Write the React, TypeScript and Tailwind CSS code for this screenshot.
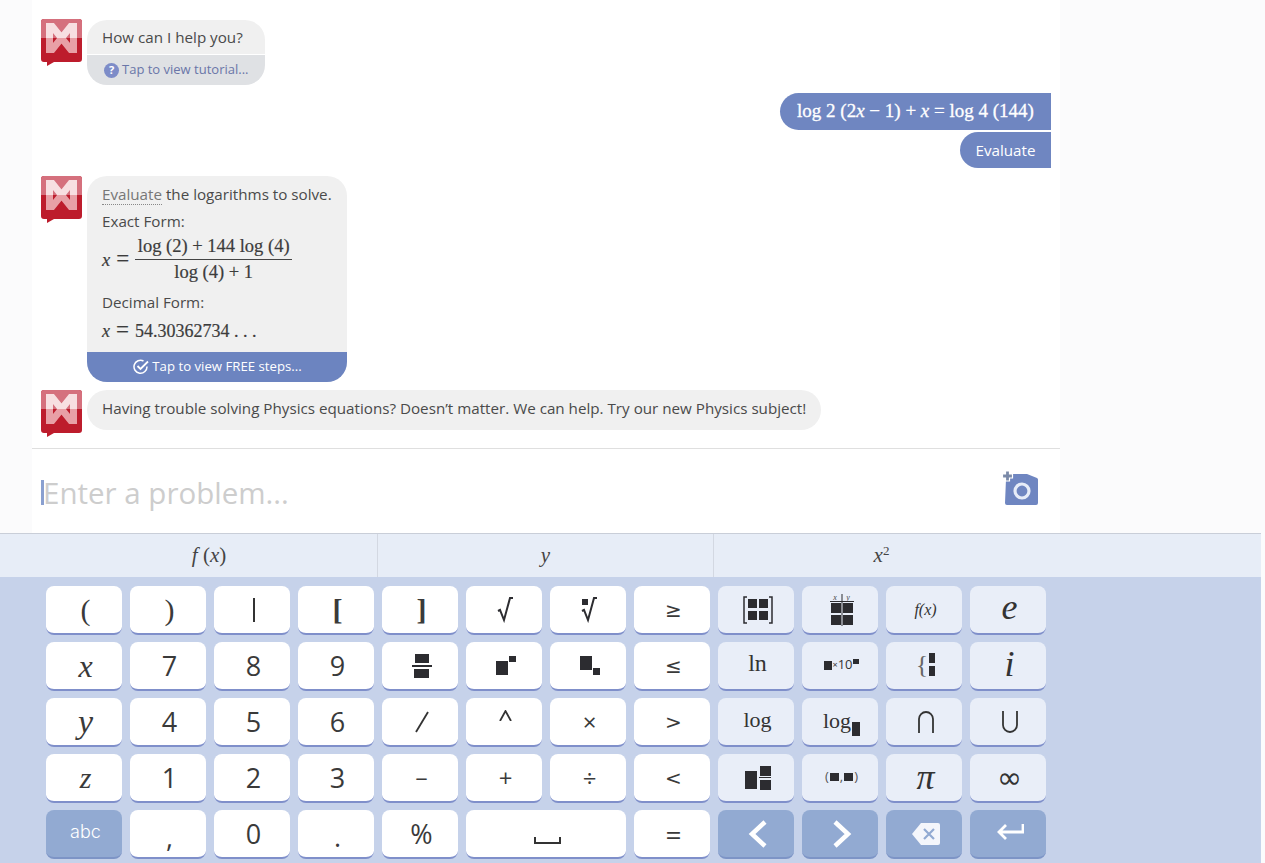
import React from 'react';

const uiFont = "[font-family:'Open_Sans','Noto_Sans',sans-serif]";
const mathFont = "[font-family:'Liberation_Serif',serif]";
const symbolFont = "[font-family:'DejaVu_Sans',sans-serif]";

const LogoLetter = ({ color, clip }: { color: string; clip: string }) => (
    <g clipPath={clip}>
        <rect x="5" y="4" width="7" height="30" fill={color} />
        <rect x="29" y="4" width="7" height="30" fill={color} />
        <path d="M8.500 4L32.500 34M32.500 4L8.500 34" stroke={color} strokeWidth="7" fill="none" />
    </g>
);

const Logo = () => (
    <svg width="41" height="47" viewBox="0 0 41 47" className="shrink-0">
        <defs>
            <clipPath id="logo-top"><rect x="0" y="4" width="41" height="15" /></clipPath>
            <clipPath id="logo-bottom"><rect x="0" y="19" width="41" height="15" /></clipPath>
        </defs>
        <path d="M3 0h35a3 3 0 0 1 3 3v37a3 3 0 0 1-3 3H13l-7 4v-4H3a3 3 0 0 1-3-3V3a3 3 0 0 1 3-3z" fill="#bd1c2c" />
        <path d="M3 0h35a3 3 0 0 1 3 3v16H0V3a3 3 0 0 1 3-3z" fill="#d5707d" />
        <LogoLetter color="#f7dfe1" clip="url(#logo-top)" />
        <LogoLetter color="#e8a0a6" clip="url(#logo-bottom)" />
    </svg>
);

const Block = ({ className = '' }: { className?: string }) => <span className={`inline-block bg-[#2c2c30] ${className}`} />;

const I = ({ children }: { children: React.ReactNode }) => <i className="italic">{children}</i>;

const Key = ({ children, tone = 'white', text = 'text-[27px]', className = '' }: { children?: React.ReactNode; tone?: 'white' | 'soft' | 'dark'; text?: string; className?: string }) => {
    const tones = {
        white: 'bg-white border-[#7f8fca] text-[#3a3a3a]',
        soft: 'bg-[#e9eef8] border-[#7f8fca] text-[#333]',
        dark: 'bg-[#92aad2] border-[#7d94c6] text-white',
    };
    return (
        <div className={`h-[49px] rounded-[8px] border-b-2 pl-[3px] flex items-center justify-center leading-none ${text} ${tones[tone]} ${className}`}>
            {children}
        </div>
    );
};

const SoftFraction = () => (
    <svg width="20" height="24" viewBox="0 0 20 24"><path d="M3 0h14v9H3zM0 11h20v2H0zM2 15h15v9H2z" fill="#2c2c30" /></svg>
);

const Root = ({ indexed = false }: { indexed?: boolean }) => (
    <svg width="18" height="26" viewBox="0 0 18 26">
        {indexed && <rect x="1" y="2" width="6" height="6" fill="#2c2c30" />}
        <path d="M1 14l2-1 4 10L13 1h3" fill="none" stroke="#2c2c30" strokeWidth="2" />
    </svg>
);

const Arrow = ({ dir }: { dir: 'left' | 'right' }) => (
    <svg width="20" height="28" viewBox="0 0 20 28">
        <path d={dir === 'left' ? 'M17 2L4 14l13 12' : 'M3 2l13 12L3 26'} fill="none" stroke="#fff" strokeWidth="4.500" />
    </svg>
);

const Eq = () => <span className="mx-[6px] text-[23px] leading-none">=</span>;

export default function App() {
    return (
        <div className={`w-[1265px] h-[863px] overflow-hidden bg-[#fbfbfc] ${uiFont} text-[#444]`}>
            <div className="ml-[32px] w-[1028px] h-[533px] bg-white flex flex-col">
                <div className="h-[449px] border-b border-[#dfdfdf] pt-[19px] pl-[9px] pr-[9px] flex flex-col">
                    <div className="flex gap-[5px] h-[74px]">
                        <Logo />
                        <div className="mt-[1px] w-[178px] h-[65px] rounded-[20px] overflow-hidden flex flex-col">
                            <div className="h-[35px] bg-[#f0f0f0] border-b border-white pl-[15px] pt-[5px] text-[15.200px] leading-[24px] text-[#4a4a4a]">How can I help you?</div>
                            <div className="h-[30px] bg-[#dfe1e4] pl-[17px] flex items-center gap-[3px] text-[13px] text-[#6a76a8]">
                                <span className="w-[15px] h-[15px] rounded-full bg-[#7d8cc8] text-white text-[11px] font-bold flex items-center justify-center">?</span>
                                Tap to view tutorial...
                            </div>
                        </div>
                    </div>
                    <div className="self-end flex flex-col items-end gap-[2px] h-[83px]">
                        <div className={`h-[37px] w-[271px] rounded-l-full rounded-tr-[18px] bg-[#6f86c1] text-white flex items-center justify-center text-[19px] ${mathFont} [-webkit-text-stroke:0.3px_white] whitespace-nowrap`}>
                            <span>log 2 (2<I>x</I> − 1) + <I>x</I> = log 4 (144)</span>
                        </div>
                        <div className="h-[36px] w-[91px] rounded-l-full rounded-br-[18px] bg-[#6f86c1] text-white flex items-center justify-center text-[15.200px]">Evaluate</div>
                    </div>
                    <div className="flex gap-[5px] h-[214px]">
                        <Logo />
                        <div className="w-[260px] h-[206px] rounded-[20px] overflow-hidden flex flex-col bg-[#f0f0f0]">
                            <div className="flex-1 pl-[15px] pt-[6px] text-[15.200px] leading-[24px] text-[#4a4a4a]">
                                <div><span className="text-[#777] border-b border-dotted border-[#888]">Evaluate</span> the logarithms to solve.</div>
                                <div className="mt-[3px]">Exact Form:</div>
                                <div className={`flex items-center ${mathFont} text-[18.500px] text-[#3c3c3c] [-webkit-text-stroke:0.2px_#3c3c3c] h-[52px]`}>
                                    <span className="whitespace-nowrap"><I>x</I><Eq /></span>
                                    <div className="flex flex-col items-center w-[157px] mt-[-1px]">
                                        <span className="leading-[26px] whitespace-nowrap">log (2) + 144 log (4)</span>
                                        <span className="h-[1px] w-full bg-[#444]" />
                                        <span className="leading-[24px] whitespace-nowrap">log (4) + 1</span>
                                    </div>
                                </div>
                                <div className="mt-[5px]">Decimal Form:</div>
                                <div className={`mt-[4px] ${mathFont} text-[18px] text-[#3c3c3c] [-webkit-text-stroke:0.2px_#3c3c3c] whitespace-nowrap`}><I>x</I><Eq />54.30362734 . . .</div>
                            </div>
                            <div className="h-[30px] bg-[#6c84c0] text-white text-[13.200px] flex items-center justify-center gap-[3px] pl-[1px]">
                                <svg width="16" height="16" viewBox="0 0 16 16"><path d="M14 7.500A6.500 6.500 0 1 1 10.500 2" fill="none" stroke="#fff" strokeWidth="1.500" /><path d="M4.500 7l3 3L15 2.500" fill="none" stroke="#fff" strokeWidth="1.800" /></svg>
                                Tap to view FREE steps...
                            </div>
                        </div>
                    </div>
                    <div className="flex gap-[5px]">
                        <Logo />
                        <div className="h-[40px] w-[734px] rounded-[20px] bg-[#f0f0f0] pl-[15px] pb-[3px] flex items-center text-[15.200px] text-[#4a4a4a] whitespace-nowrap">
                            Having trouble solving Physics equations? Doesn’t matter. We can help. Try our new Physics subject!
                        </div>
                    </div>
                </div>
                <div className="flex-1 flex items-center pl-[9px] pr-[21px]">
                    <span className="w-[3px] h-[25px] bg-[#8aa0d0] mt-[3px]" />
                    <span className="flex-1 mt-[3px] -ml-[1px] text-[29.500px] text-[#cdcdcd] leading-none">Enter a problem...</span>
                    <svg width="38" height="35" viewBox="0 0 38 35" className="-mt-[7px]">
                        <path d="M5 9l7-5h14l10 4a2 2 0 0 1 1 2v23a2 2 0 0 1-2 2H6a2 2 0 0 1-2-2z" fill="#6f86c1" />
                        <circle cx="21" cy="21" r="7" fill="#6f86c1" stroke="#e6ecf8" strokeWidth="3.200" />
                        <path d="M4.500 1h4v3h3v4h-3v3h-4V8h-3V4h3z" fill="#7b8aa8" stroke="#fff" strokeWidth="1.200" />
                    </svg>
                </div>
            </div>
            <div className="w-[1261px] h-[330px] bg-[#c6d2ea]">
                <div className={`h-[44px] bg-[#e7edf7] border-t border-[#c9ced8] flex pl-[41px] ${mathFont} text-[21px] text-[#444]`}>
                    <div className="w-[337px] border-r border-[#d3d8e2] flex items-center justify-center"><span><I>f</I> (<I>x</I>)</span></div>
                    <div className="w-[336px] border-r border-[#d3d8e2] flex items-center justify-center"><I>y</I></div>
                    <div className="w-[335px] flex items-center justify-center"><span><I>x</I><sup className="text-[13px]">2</sup></span></div>
                </div>
                <div className="pl-[46px] pt-[9px] grid grid-cols-[repeat(12,76px)] auto-rows-[49px] gap-x-[8px] gap-y-[7px]">
                    {/* row 1 */}
                    <Key text="text-[30px]"><span className={mathFont}>(</span></Key>
                    <Key text="text-[30px]"><span className={mathFont}>)</span></Key>
                    <Key><span className="w-[2px] h-[24px] bg-[#333]" /></Key>
                    <Key text="text-[30px]"><span className={`${mathFont} font-bold`}>[</span></Key>
                    <Key text="text-[30px]"><span className={`${mathFont} font-bold`}>]</span></Key>
                    <Key><Root /></Key>
                    <Key><Root indexed /></Key>
                    <Key text={`${symbolFont} text-[20px]`}>≥</Key>
                    <Key tone="soft">
                        <svg width="30" height="28" viewBox="0 0 30 28"><path d="M4 1H1v26h3M26 1h3v26h-3" fill="none" stroke="#2c2c30" strokeWidth="1.500" /><path d="M5 3h9v9H5zM16 3h9v9h-9zM5 15h9v9H5zM16 15h9v9h-9z" fill="#2c2c30" /></svg>
                    </Key>
                    <Key tone="soft">
                        <svg width="24" height="32" viewBox="0 0 24 32">
                            <text x="5" y="6" fontSize="8" fontStyle="italic" fontFamily="Liberation Serif" textAnchor="middle" fill="#444">x</text>
                            <text x="18" y="6" fontSize="8" fontStyle="italic" fontFamily="Liberation Serif" textAnchor="middle" fill="#444">y</text>
                            <path d="M1 9h10v10H1zM13 9h10v10H13zM1 21h10v10H1zM13 21h10v10H13zM0 7h24v1H0zM11.500 0h1v32h-1z" fill="#2c2c30" />
                        </svg>
                    </Key>
                    <Key tone="soft" text="text-[16px]"><span className={`${mathFont} italic`}>f(x)</span></Key>
                    <Key tone="soft" text="text-[36px]"><span className={`${mathFont} italic -mt-[6px]`}>e</span></Key>
                    {/* row 2 */}
                    <Key text="text-[32px]"><span className={`${mathFont} italic`}>x</span></Key>
                    <Key>7</Key>
                    <Key>8</Key>
                    <Key>9</Key>
                    <Key><SoftFraction /></Key>
                    <Key><svg width="20" height="19" viewBox="0 0 20 19"><path d="M0 5h12v14H0zM13 0h7v6h-7z" fill="#2c2c30" /></svg></Key>
                    <Key><svg width="20" height="19" viewBox="0 0 20 19"><path d="M0 0h12v14H0zM13 12h7v7h-7z" fill="#2c2c30" /></svg></Key>
                    <Key text={`${symbolFont} text-[20px]`}>≤</Key>
                    <Key tone="soft" text="text-[24px]"><span className={`${mathFont} -mt-[5px]`}>ln</span></Key>
                    <Key tone="soft" text="text-[13px]">
                        <span className="flex items-center -mt-[2px]"><Block className="w-[8px] h-[9px] mt-[1px]" /><span className="text-[9px]">×</span>10<Block className="w-[6px] h-[5px] -mt-[7px]" /></span>
                    </Key>
                    <Key tone="soft" text="text-[26px]">
                        <span className="flex items-center gap-[1px] -mt-[2px]"><span className={`${mathFont} text-[#666]`}>{'{'}</span><span className="flex flex-col gap-[3px]"><Block className="w-[6px] h-[10px]" /><Block className="w-[6px] h-[10px]" /></span></span>
                    </Key>
                    <Key tone="soft" text="text-[36px]"><span className={`${mathFont} italic -mt-[4px]`}>i</span></Key>
                    {/* row 3 */}
                    <Key text="text-[34px]"><span className={`${mathFont} italic`}>y</span></Key>
                    <Key>4</Key>
                    <Key>5</Key>
                    <Key>6</Key>
                    <Key><svg width="16" height="22" viewBox="0 0 16 22"><path d="M14 1L2 21" stroke="#333" strokeWidth="1.800" /></svg></Key>
                    <Key className="!items-start pt-[12px]"><svg width="13" height="11" viewBox="0 0 13 11"><path d="M1 11L6.500 1 12 11" fill="none" stroke="#333" strokeWidth="1.800" /></svg></Key>
                    <Key text="text-[24px]">×</Key>
                    <Key text={`${symbolFont} text-[20px]`}>&gt;</Key>
                    <Key tone="soft" text="text-[22px]"><span className={`${mathFont} -mt-[4px]`}>log</span></Key>
                    <Key tone="soft" text="text-[22px]"><span className={`${mathFont} flex items-end -mt-[1px]`}>log<Block className="w-[8px] h-[14px] -mb-[4px] ml-[1px]" /></span></Key>
                    <Key tone="soft"><svg width="16" height="22" viewBox="0 0 16 22"><path d="M1 22V8a7 7 0 0 1 14 0v14" fill="none" stroke="#333" strokeWidth="1.800" /></svg></Key>
                    <Key tone="soft"><svg width="16" height="22" viewBox="0 0 16 22"><path d="M1 0v14a7 7 0 0 0 14 0V0" fill="none" stroke="#333" strokeWidth="1.800" /></svg></Key>
                    {/* row 4 */}
                    <Key text="text-[30px]"><span className={`${mathFont} italic`}>z</span></Key>
                    <Key>1</Key>
                    <Key>2</Key>
                    <Key>3</Key>
                    <Key text="text-[22px]">−</Key>
                    <Key text="text-[24px]">+</Key>
                    <Key text="text-[24px]">÷</Key>
                    <Key text={`${symbolFont} text-[20px]`}>&lt;</Key>
                    <Key tone="soft"><svg width="26" height="24" viewBox="0 0 26 24"><path d="M0 5h12v18H0zM15 0h11v10H15zM14 11h12v1H14zM15 14h11v10H15z" fill="#2c2c30" /></svg></Key>
                    <Key tone="soft" text="text-[13px]"><span className="flex items-center gap-[1px] text-[#555] -mt-[2px]">(<Block className="w-[9px] h-[8px]" />,<Block className="w-[9px] h-[8px]" />)</span></Key>
                    <Key tone="soft" text="text-[36px]"><span className={`${mathFont} italic -mt-[2px]`}>π</span></Key>
                    <Key tone="soft" text={`${symbolFont} text-[30px]`}>∞</Key>
                    {/* row 5 */}
                    <Key tone="dark" text="text-[18px] font-light [font-family:'Inter',sans-serif]" className="pb-[4px]">abc</Key>
                    <Key><span className="mt-[6px]">,</span></Key>
                    <Key>0</Key>
                    <Key><span className="mt-[6px]">.</span></Key>
                    <Key>%</Key>
                    <Key className="col-span-2">
                        <svg width="27" height="8" viewBox="0 0 27 8" className="mt-[14px]"><path d="M1 0v6h25V0" fill="none" stroke="#333" strokeWidth="2" /></svg>
                    </Key>
                    <Key text="text-[28px]">=</Key>
                    <Key tone="dark"><Arrow dir="left" /></Key>
                    <Key tone="dark"><Arrow dir="right" /></Key>
                    <Key tone="dark">
                        <svg width="28" height="22" viewBox="0 0 28 22"><path d="M9 0h17a2 2 0 0 1 2 2v18a2 2 0 0 1-2 2H9L0 11z" fill="#f4f6fb" /><path d="M12 6l10 10M22 6L12 16" stroke="#92aad2" strokeWidth="2.200" /></svg>
                    </Key>
                    <Key tone="dark">
                        <svg width="28" height="16" viewBox="0 0 28 16" className="-mt-[4px]"><path d="M27 0v8H4M10 1L3 8l7 7" fill="none" stroke="#fff" strokeWidth="2.800" /></svg>
                    </Key>
                </div>
            </div>
        </div>
    );
}
